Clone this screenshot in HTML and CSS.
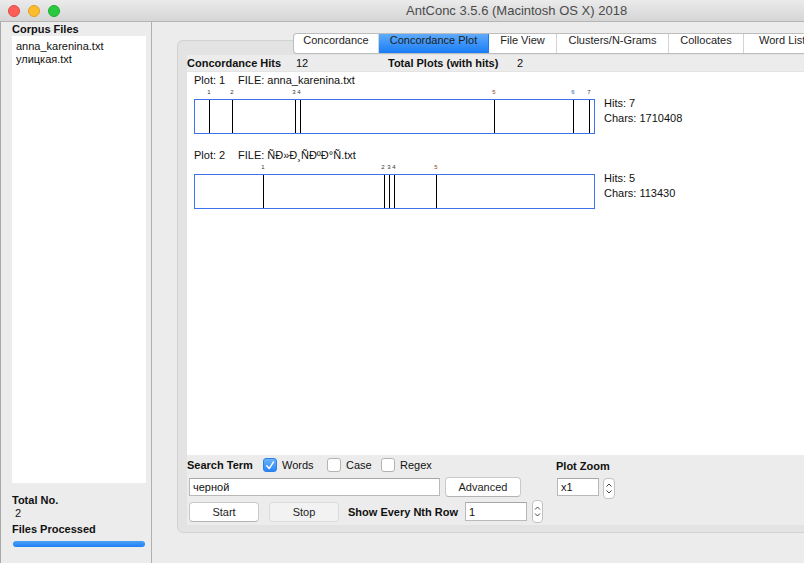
FILE: index.html
```html
<!DOCTYPE html>
<html>
<head>
<meta charset="utf-8">
<title>AntConc</title>
<link rel="stylesheet" href="styles.css">
</head>
<body>
<div class="window">
  <div class="titlebar">
    <div class="lights"><span class="light red"></span><span class="light yellow"></span><span class="light green"></span></div>
    <div class="title">AntConc 3.5.6 (Macintosh OS X) 2018</div>
  </div>
  <div class="main">
    <aside class="sidebar">
      <div class="side-label">Corpus Files</div>
      <ul class="file-list">
        <li>anna_karenina.txt</li>
        <li>улицкая.txt</li>
      </ul>
      <div class="side-label total">Total No.</div>
      <div class="side-count">2</div>
      <div class="side-label processed">Files Processed</div>
      <div class="progress"></div>
    </aside>
    <section class="content">
      <div class="group">
        <div class="tabs">
          <div class="tab first">Concordance</div>
          <div class="tab active">Concordance Plot</div>
          <div class="tab fileview">File View</div>
          <div class="tab clusters">Clusters/N-Grams</div>
          <div class="tab colloc">Collocates</div>
          <div class="tab wordlist">Word List</div>
        </div>
        <div class="panel">
          <div class="hits-row">
            <b class="hr-l1">Concordance Hits</b><span class="hr-v1">12</span><b class="hr-l2">Total Plots (with hits)</b><span>2</span>
          </div>
          <div class="plots">
            <div class="plot">
              <div class="plot-label"><span class="plot-no">Plot: 1</span><span>FILE: anna_karenina.txt</span></div>
              <div class="plot-body">
                <div class="plot-graph">
                  <div class="ticks">
                    <span style="left:15px">1</span>
                    <span style="left:38px">2</span>
                    <span style="left:100px">3</span>
                    <span style="left:105px">4</span>
                    <span class="t-red" style="left:300px">5</span>
                    <span class="t-blue" style="left:379px">6</span>
                    <span style="left:395px">7</span>
                  </div>
                  <div class="plot-box">
                    <i style="left:14px"></i><i style="left:37px"></i><i style="left:100px"></i><i style="left:105px"></i><i style="left:299px"></i><i style="left:378px"></i><i style="left:394px"></i>
                  </div>
                </div>
                <div class="plot-stats">Hits: 7<br>Chars: 1710408</div>
              </div>
            </div>
            <div class="plot second">
              <div class="plot-label"><span class="plot-no">Plot: 2</span><span>FILE: Ñ­Ð»Ð¸ÑÐºÐ°Ñ.txt</span></div>
              <div class="plot-body">
                <div class="plot-graph">
                  <div class="ticks">
                    <span style="left:69px">1</span>
                    <span style="left:189px">2</span>
                    <span style="left:195px">3</span>
                    <span style="left:200px">4</span>
                    <span class="t-red" style="left:242px">5</span>
                  </div>
                  <div class="plot-box">
                    <i style="left:68px"></i><i style="left:189px"></i><i style="left:194px"></i><i style="left:199px"></i><i style="left:241px"></i>
                  </div>
                </div>
                <div class="plot-stats">Hits: 5<br>Chars: 113430</div>
              </div>
            </div>
          </div>
          <div class="controls">
            <div class="search">
              <div class="row row1">
                <b class="lbl search-lbl">Search Term</b>
                <div class="check words"><span class="box checked"><svg width="13" height="13" viewBox="0 0 13 13"><path d="M3 6.8 L5.6 9.8 L10.2 2.8" fill="none" stroke="#fff" stroke-width="1.6" stroke-linecap="round" stroke-linejoin="round"/></svg></span>Words</div>
                <div class="check case"><span class="box"></span>Case</div>
                <div class="check"><span class="box"></span>Regex</div>
              </div>
              <div class="row row2">
                <div class="field term">черной</div>
                <div class="btn adv">Advanced</div>
              </div>
              <div class="row row3">
                <div class="btn start">Start</div>
                <div class="btn stop">Stop</div>
                <b class="lbl nth-lbl">Show Every Nth Row</b>
                <div class="field nth">1</div>
                <div class="stepper"><svg width="11" height="23" viewBox="0 0 11 23"><path d="M3 9.5 L5.5 7 L8 9.5 M3 13.5 L5.5 16 L8 13.5" fill="none" stroke="#444" stroke-width="1"/></svg></div>
              </div>
            </div>
            <div class="zoom">
              <b class="lbl">Plot Zoom</b>
              <div class="zoom-row">
                <div class="field zoomf">x1</div>
                <div class="stepper small"><svg width="12" height="21" viewBox="0 0 12 21"><path d="M3.5 8.5 L6 6 L8.5 8.5 M3.5 12.5 L6 15 L8.5 12.5" fill="none" stroke="#444" stroke-width="1"/></svg></div>
              </div>
            </div>
          </div>
        </div>
      </div>
    </section>
  </div>
</div>
</body>
</html>
```

FILE: styles.css
```css
* { box-sizing: border-box; }
html, body { margin: 0; padding: 0; }
body {
  width: 804px;
  height: 563px;
  overflow: hidden;
  font-family: "Liberation Sans", Arial, sans-serif;
  font-size: 11px;
  color: #111;
  background: #ececec;
}
.window { display: flex; flex-direction: column; height: 563px; }

/* title bar */
.titlebar {
  height: 22px;
  flex: none;
  display: flex;
  align-items: center;
  background: linear-gradient(#ebebeb, #d5d5d5);
  border-bottom: 1px solid #b4b4b4;
}
.lights { display: flex; gap: 8px; padding-left: 8px; }
.light { width: 12px; height: 12px; border-radius: 50%; }
.red { background: #fc5f57; border: 1px solid #de4a42; }
.yellow { background: #fdbc2e; border: 1px solid #dea123; }
.green { background: #29c940; border: 1px solid #1fac2d; }
.title { margin-left: 346px; font-size: 13px; color: #4a4a4a; }

.main { flex: 1; display: flex; min-height: 0; overflow: hidden; }

/* sidebar */
.sidebar {
  width: 152px;
  flex: none;
  border-left: 1px solid #a9a9a9;
  border-right: 1px solid #b0b0b0;
  padding-left: 11px;
  padding-top: 1px;
  display: flex;
  flex-direction: column;
}
.side-label { font-weight: bold; line-height: 13px; }
.file-list {
  list-style: none;
  margin: 0;
  padding: 4px 0 0 4px;
  width: 134px;
  height: 447px;
  background: #fff;
  line-height: 13px;
}
.side-label.total { margin-top: 11px; }
.side-count { line-height: 13px; padding-left: 3px; }
.side-label.processed { margin-top: 3px; }
.progress {
  margin-top: 5px;
  margin-left: 1px;
  width: 132px;
  height: 6px;
  border-radius: 3px;
  background: linear-gradient(#4aa0f8, #1f80f2);
}

/* content */
.content { flex: 1; min-width: 0; padding: 18px 0 0 25px; overflow: hidden; }
.group {
  width: 660px;
  height: 493px;
  border: 1px solid #d2d2d2;
  border-radius: 6px;
  background: #e3e3e3;
  padding: 0 0 7px 9px;
  display: flex;
  flex-direction: column;
}
.tabs {
  flex: none;
  display: flex;
  height: 21px;
  margin-top: -8px;
  margin-left: 106px;
  background: #fff;
  border: 1px solid #bdbdbd;
  border-right: none;
  border-radius: 4px 0 0 4px;
  overflow: hidden;
}
.tab {
  padding-top: 0;
  line-height: 13px;
  text-align: center;
  color: #1d1d1d;
  border-right: 1px solid #d3d3d3;
}
.tab.first { width: 85px; }
.tab.active { width: 110px; background: linear-gradient(#5eabfb, #1a7cf6); border-right-color: #1a7cf6; }
.tab.fileview { width: 68px; }
.tab.clusters { width: 112px; }
.tab.colloc { width: 75px; }
.tab.wordlist { width: 70px; border-right: none; text-align: left; padding-left: 15px; }

.panel {
  flex: 1;
  margin-top: 1px;
  background: #ececec;
  display: flex;
  flex-direction: column;
}
.hits-row { height: 16px; flex: none; display: flex; align-items: center; }
.hr-l1 { width: 109px; }
.hr-v1 { width: 92px; }
.hr-l2 { width: 129px; }

.plots {
  height: 384px;
  flex: none;
  background: #fff;
  border-top: 1px solid #e4e4e4;
  padding: 2px 0 0 7px;
}
.plot-label { line-height: 13px; }
.plot-no { display: inline-block; width: 44px; }
.plot.second { margin-top: 15px; }
.plot-body { display: flex; }
.plot-graph { width: 401px; }
.ticks { position: relative; height: 12px; font-size: 6px; line-height: 8px; color: #333; }
.ticks span { position: absolute; top: 1px; transform: translateX(-50%); }
.ticks .t-red { color: #9a3b17; }
.ticks .t-blue { color: #2a5ab0; }
.plot-box {
  position: relative;
  height: 35px;
  border: 1px solid #3c72f0;
}
.plot-box i { position: absolute; top: 0; bottom: 0; width: 1px; background: #000; }
.plot-stats { margin-left: 9px; margin-top: 9px; line-height: 15px; }

/* controls */
.controls { flex: 1; display: flex; padding-top: 2px; }
.search { width: 369px; }
.row { display: flex; align-items: center; }
.row1 { height: 16px; }
.lbl { font-weight: bold; }
.search-lbl { width: 76px; }
.check { display: flex; align-items: center; }
.check.words { width: 64px; }
.check.case { width: 54px; }
.box {
  width: 14px;
  height: 14px;
  margin-right: 5px;
  border: 1px solid #b3b3b3;
  border-radius: 3px;
  background: #fff;
  display: flex;
  align-items: center;
  justify-content: center;
}
.box.checked { background: linear-gradient(#6ab4fb, #2a86f6); border-color: #2e7fe6; }
.row2 { height: 20px; margin-top: 4px; }
.field {
  background: #fff;
  border: 1px solid #b9b9b9;
  border-top-color: #a6a6a6;
  padding-left: 3px;
  display: flex;
  align-items: center;
}
.term { margin-left: 2px; width: 251px; height: 18px; }
.btn {
  height: 20px;
  display: flex;
  align-items: center;
  justify-content: center;
  background: #fff;
  border: 1px solid #c9c9c9;
  border-bottom-color: #b3b3b3;
  border-radius: 4px;
  color: #1d1d1d;
}
.adv { margin-left: 5px; width: 76px; }
.row3 { height: 23px; margin-top: 3px; }
.start { margin-left: 2px; width: 70px; }
.stop { margin-left: 10px; width: 70px; background: #f2f2f2; border-color: #dcdcdc; }
.nth-lbl { margin-left: 9px; width: 117px; }
.nth { width: 62px; height: 19px; }
.stepper {
  margin-left: 5px;
  width: 11px;
  height: 23px;
  background: #fff;
  border: 1px solid #c2c2c2;
  border-radius: 4px;
  display: flex;
  align-items: center;
  justify-content: center;
  overflow: hidden;
}
.stepper svg { flex: none; }
.zoom { padding-top: 1px; }
.zoom .lbl { display: block; line-height: 16px; }
.zoom-row { display: flex; align-items: flex-start; margin-top: 4px; }
.zoomf { margin-left: 1px; width: 42px; height: 18px; }
.stepper.small { margin-left: 4px; width: 12px; height: 21px; }
```
